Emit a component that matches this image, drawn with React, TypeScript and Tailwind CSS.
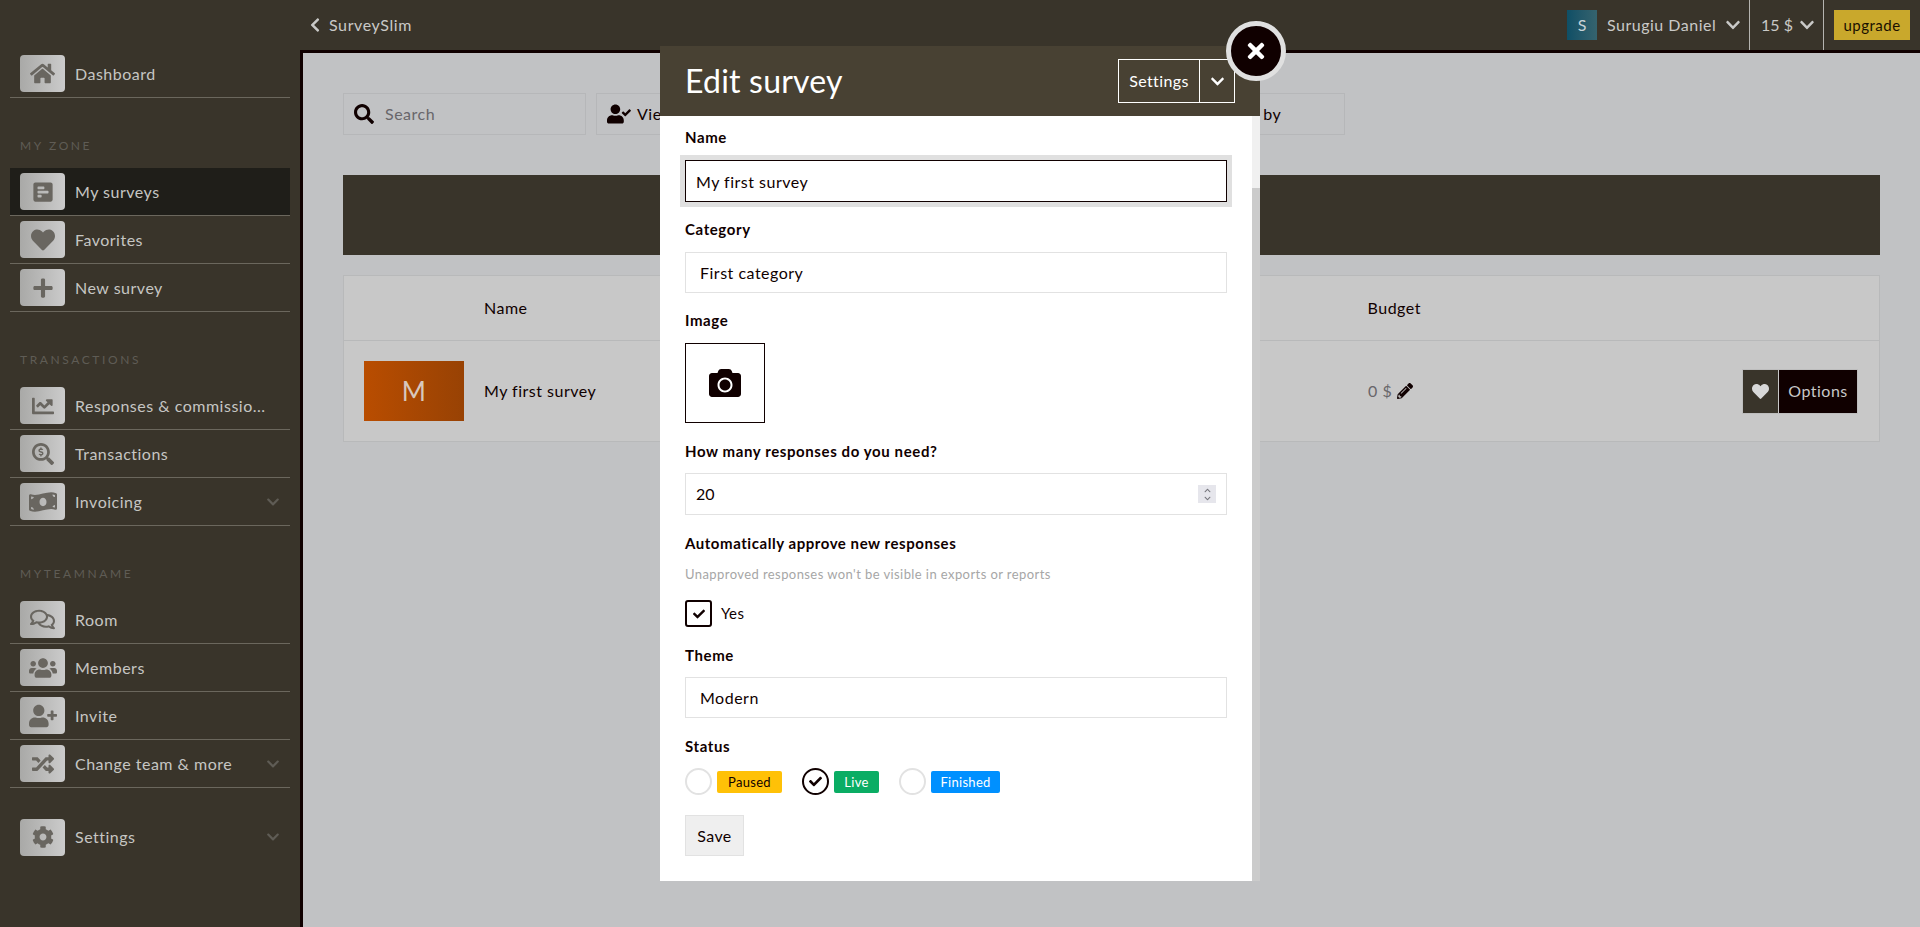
import React from "react";
import {
  FaCamera,
  FaChartLine,
  FaCheck,
  FaChevronDown,
  FaChevronLeft,
  FaCog,
  FaHeart,
  FaHome,
  FaMoneyBillWave,
  FaPencilAlt,
  FaPlus,
  FaPollH,
  FaRandom,
  FaRegComments,
  FaSearch,
  FaSearchDollar,
  FaTimes,
  FaUserCheck,
  FaUserPlus,
  FaUsers,
} from "react-icons/fa";

type NavItem = {
  label: string;
  icon: React.ReactNode;
  active?: boolean;
  more?: boolean;
  noBorder?: boolean;
};

function NavRow({ label, icon, active, more, noBorder }: NavItem) {
  return (
    <div
      className={`flex items-center h-12 pl-[10px] pr-[10px] ${noBorder ? "" : "border-b border-[#6b675d]"} ${
        active ? "bg-[#1f1e19]" : ""
      }`}
    >
      <div className="flex items-center justify-center w-[45px] h-[37px] rounded-[4px] bg-gradient-to-r from-[#a9a9a7] to-[#cbcbcb] text-[#696660] text-[22px]">
        {icon}
      </div>
      <span className="ml-[10px] flex-1 text-[16px] tracking-[0.5px] text-[#c6c6c3] whitespace-nowrap">
        {label}
      </span>
      {more && <FaChevronDown className="text-[#5f5c55] text-[14px]" />}
    </div>
  );
}

function SectionTitle({ title }: { title: string }) {
  return (
    <div className="h-[70px] flex items-end pb-[14px] pl-[10px] text-[12px] leading-4 tracking-[2.6px] text-[#5f5c55]">
      {title}
    </div>
  );
}

function Sidebar() {
  return (
    <aside className="w-[300px] shrink-0 pl-[10px] pr-[10px]">
      <NavRow label="Dashboard" icon={<FaHome className="text-[25px]" />} />
      <SectionTitle title="MY ZONE" />
      <NavRow label="My surveys" icon={<FaPollH />} active />
      <NavRow label="Favorites" icon={<FaHeart className="text-[24px]" />} />
      <NavRow label="New survey" icon={<FaPlus className="text-[22px]" />} />
      <SectionTitle title="TRANSACTIONS" />
      <NavRow label="Responses & commissio..." icon={<FaChartLine />} />
      <NavRow label="Transactions" icon={<FaSearchDollar />} />
      <NavRow label="Invoicing" icon={<FaMoneyBillWave className="text-[28px]" />} more />
      <SectionTitle title="MYTEAMNAME" />
      <NavRow label="Room" icon={<FaRegComments className="text-[25px]" />} />
      <NavRow label="Members" icon={<FaUsers className="text-[28px]" />} />
      <NavRow label="Invite" icon={<FaUserPlus className="text-[28px]" />} />
      <NavRow label="Change team & more" icon={<FaRandom />} more />
      <div className="mt-[25px]">
        <NavRow label="Settings" icon={<FaCog />} more noBorder />
      </div>
    </aside>
  );
}

function TopBar() {
  return (
    <header className="flex items-center h-[50px] pl-[307px] pr-[10px] text-[#c9c9c7]">
      <FaChevronLeft className="text-[16px]" />
      <span className="ml-[6px] text-[16px] tracking-[0.6px]">SurveySlim</span>
      <div className="ml-auto flex items-center h-full">
        <div className="flex items-center justify-center w-[30px] h-[30px] bg-gradient-to-r from-[#0e4f66] to-[#35636e] text-[16px] text-[#c8d4d8]">
          S
        </div>
        <span className="ml-[10px] w-[108px] text-[16px] tracking-[0.5px] whitespace-nowrap">Surugiu Daniel</span>
        <FaChevronDown className="ml-[10px] text-[16px]" />
        <div className="ml-2 h-full w-px bg-[#b5b4b0]" />
        <span className="ml-[11px] w-[28px] text-[16px] whitespace-nowrap">15 $</span>
        <FaChevronDown className="ml-[10px] text-[16px]" />
        <div className="ml-2 h-full w-px bg-[#b5b4b0]" />
        <button className="ml-[10px] w-[76px] h-[30px] bg-[#c9a82c] text-[#1a1000] text-[15px] tracking-[0.5px]">
          upgrade
        </button>
      </div>
    </header>
  );
}

function Toolbar() {
  const box = "flex items-center h-[42px] border border-[#b6b7b9] text-[16px]";
  return (
    <div className="grid grid-cols-[repeat(4,243px)] gap-[10px]">
      <div className={`${box} pl-[10px]`}>
        <FaSearch className="text-[20px] text-[#100000]" />
        <span className="ml-[11px] text-[#68666a] tracking-[0.5px]">Search</span>
      </div>
      <div className={`${box} pl-[10px] text-[#100000]`}>
        <FaUserCheck className="text-[24px]" />
        <span className="ml-[6px] tracking-[0.5px]">View</span>
      </div>
      <div className={box} />
      <div className={`${box} pl-[112px] text-[#100000]`}>
        <span className="tracking-[0.5px] whitespace-nowrap">Order by</span>
      </div>
    </div>
  );
}

function SurveysTable() {
  return (
    <div className="mt-5 border border-[#b8b9ba] bg-[#c8c8c8] text-[#100000] text-[16px] tracking-[0.5px]">
      <div className="flex items-center h-[65px] border-b border-[#b8b9ba]">
        <span className="ml-[140px]">Name</span>
        <span className="ml-[840px]">Budget</span>
      </div>
      <div className="flex items-center h-[100px]">
        <div className="ml-5 flex items-center justify-center w-[100px] h-[60px] bg-gradient-to-r from-[#b94d00] to-[#984204] text-[#d8c8bc] text-[26px]">
          M
        </div>
        <span className="ml-5 w-[884px]">My first survey</span>
        <span className="text-[#68666a]">0 $</span>
        <FaPencilAlt className="ml-[5px] text-[16px]" />
        <div className="ml-auto mr-[21px] flex h-[45px] border border-[#bdbdbd]">
          <div className="flex items-center justify-center w-[36px] bg-[#39342a] border-r border-[#c8c8c8] text-[#d8d8d8] text-[17px]">
            <FaHeart />
          </div>
          <div className="flex items-center justify-center w-[78px] bg-[#100000] text-[#c8c8c8]">Options</div>
        </div>
      </div>
    </div>
  );
}

function FieldLabel({ children, tight }: { children: React.ReactNode; tight?: boolean }) {
  return (
    <div
      className={`h-5 leading-5 text-[15px] font-bold tracking-[0.6px] text-[#100000] ${
        tight ? "mb-3" : "mb-[13px]"
      }`}
    >
      {children}
    </div>
  );
}

function TextBox({ children }: { children: React.ReactNode }) {
  return (
    <div className="flex items-center h-[41px] pl-[14px] border-[1.5px] border-[#e2e2e2] text-[16px] tracking-[0.5px] text-[#100000]">
      {children}
    </div>
  );
}

function StatusOption({
  label,
  badge,
  checked,
}: {
  label: string;
  badge: string;
  checked?: boolean;
}) {
  return (
    <div className="flex items-center">
      <div
        className={`flex items-center justify-center w-[27px] h-[27px] rounded-full border-2 ${
          checked ? "border-[#100000]" : "border-[#e2e2e2]"
        }`}
      >
        {checked && <FaCheck className="text-[13px] text-[#100000]" />}
      </div>
      <span className={`ml-[5px] h-[22px] leading-[22px] text-center rounded-[2px] text-[13px] tracking-[0.3px] ${badge}`}>
        {label}
      </span>
    </div>
  );
}

function EditSurveyModal() {
  return (
    <div className="absolute left-[660px] top-[46px] w-[600px] h-[835px] flex flex-col">
      <div className="flex items-center h-[70px] shrink-0 pl-[25px] bg-[#484133]">
        <h1 className="text-[32px] tracking-[0.2px] text-white">Edit survey</h1>
        <div className="ml-auto mr-[25px] flex h-[44px] border border-white text-white">
          <span className="flex items-center justify-center w-[81px] border-r border-white text-[16px] tracking-[0.4px]">
            Settings
          </span>
          <span className="flex items-center justify-center w-[34px]">
            <FaChevronDown className="text-[15px]" />
          </span>
        </div>
      </div>
      <div className="flex flex-1 min-h-0">
        <div className="flex-1 bg-white pt-[11px] px-[25px]">
          <FieldLabel>Name</FieldLabel>
          <input
            readOnly
            value="My first survey"
            className="block w-full h-[42px] pl-[10px] border-[1.5px] border-[#100000] ring-[5px] ring-[#e0e0e0] outline-none text-[16px] tracking-[0.5px] text-[#100000]"
          />
          <div className="mt-[17px]">
            <FieldLabel>Category</FieldLabel>
            <TextBox>First category</TextBox>
          </div>
          <div className="mt-[17px]">
            <FieldLabel>Image</FieldLabel>
            <div className="flex items-center justify-center w-20 h-20 border border-[#100000] text-[#100000] text-[32px]">
              <FaCamera />
            </div>
          </div>
          <div className="mt-[18px]">
            <FieldLabel tight>How many responses do you need?</FieldLabel>
            <div className="flex items-center h-[42px] pl-[10px] pr-[10px] border-[1.5px] border-[#e2e2e2] text-[16px] text-[#100000]">
              20
              <div className="ml-auto flex flex-col items-center justify-center w-[18px] h-[18px] bg-[#e6e6ec] text-[#77777d]">
                <FaChevronDown className="rotate-180 text-[7px]" />
                <FaChevronDown className="mt-px text-[7px]" />
              </div>
            </div>
          </div>
          <div className="mt-[18px]">
            <div className="h-5 leading-5 text-[15px] font-bold tracking-[0.55px] text-[#100000]">
              Automatically approve new responses
            </div>
            <div className="mt-[13px] h-4 leading-4 text-[13px] tracking-[0.42px] text-[#a6a6a6]">
              Unapproved responses won't be visible in exports or reports
            </div>
            <div className="mt-[18px] flex items-center">
              <div className="flex items-center justify-center w-[27px] h-[27px] rounded-[3px] border-2 border-[#100000]">
                <FaCheck className="text-[12px] text-[#100000]" />
              </div>
              <span className="ml-[9px] text-[15px] tracking-[0.4px] text-[#100000]">Yes</span>
            </div>
          </div>
          <div className="mt-[18px]">
            <FieldLabel tight>Theme</FieldLabel>
            <TextBox>Modern</TextBox>
          </div>
          <div className="mt-[18px]">
            <FieldLabel tight>Status</FieldLabel>
            <div className="flex gap-5">
              <StatusOption label="Paused" badge="w-[65px] bg-[#ffc107] text-[#100000]" />
              <StatusOption label="Live" badge="w-[45px] bg-[#0aad64] text-white" checked />
              <StatusOption label="Finished" badge="w-[69px] bg-[#0090ff] text-white" />
            </div>
          </div>
          <button className="mt-5 w-[59px] h-[41px] bg-[#efefef] border-[1.5px] border-[#e2e2e2] text-[16px] tracking-[0.4px] text-[#100000]">
            Save
          </button>
        </div>
        <div className="w-2 flex flex-col">
          <div className="h-[72px] bg-[#f0f0f0]" />
          <div className="flex-1 bg-[#cbcbcb]" />
        </div>
      </div>
      <button className="absolute left-[566px] top-[-25px] flex items-center justify-center w-[60px] h-[60px] rounded-full border-[5px] border-[#e0e0e0] bg-[#100000] text-white text-[24px]">
        <FaTimes />
      </button>
    </div>
  );
}

export default function App() {
  return (
    <div className="relative h-screen overflow-hidden bg-[#39342a] font-[Lato,sans-serif]">
      <TopBar />
      <div className="flex h-[877px]">
        <Sidebar />
        <main className="flex-1 bg-[#c1c2c4] border-l-[3px] border-t-[3px] border-[#100000] pl-10 pr-10 pt-10">
          <Toolbar />
          <div className="mt-10 h-20 bg-[#39342a]" />
          <SurveysTable />
        </main>
      </div>
      <EditSurveyModal />
    </div>
  );
}
